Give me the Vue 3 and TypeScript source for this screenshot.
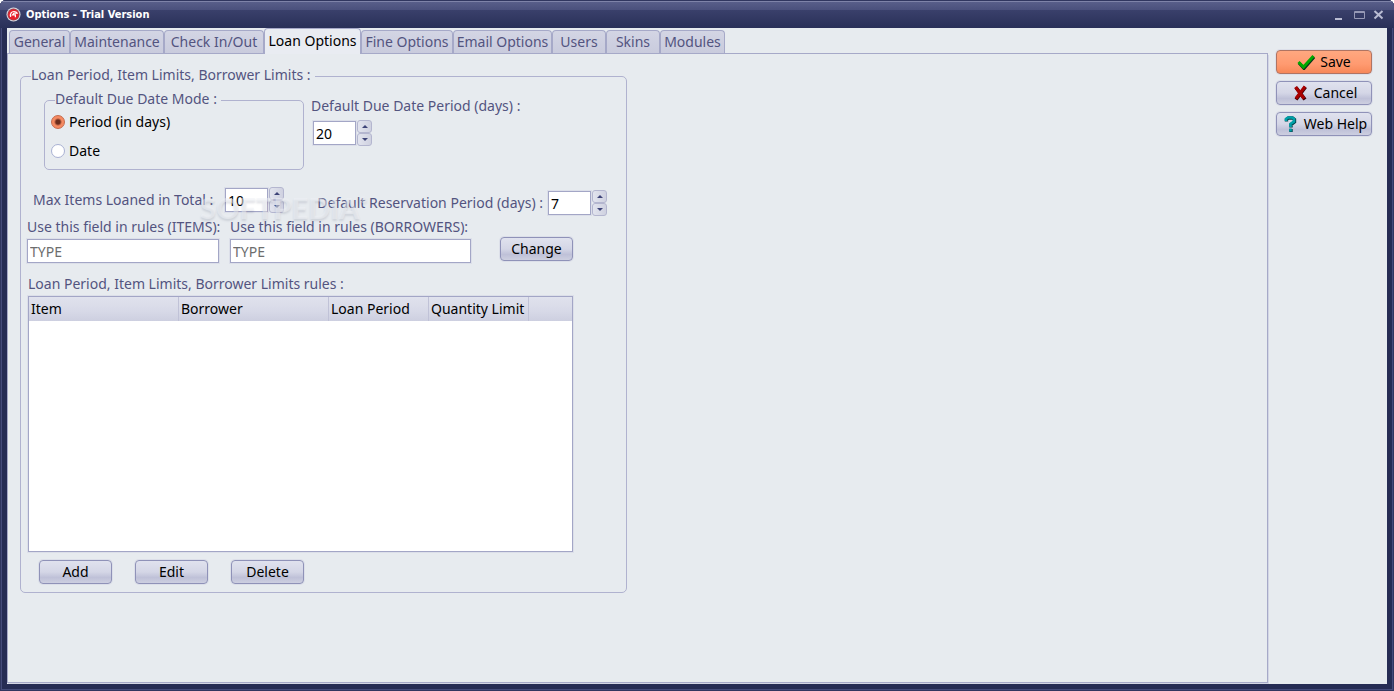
<script setup lang="ts">
import { ref } from 'vue'

const tabs = ['General', 'Maintenance', 'Check In/Out', 'Loan Options', 'Fine Options', 'Email Options', 'Users', 'Skins', 'Modules']
const activeTab = ref('Loan Options')
const dueMode = ref('period')
const duePeriod = ref(20)
const maxItems = ref(10)
const reservation = ref(7)
const columns = ['Item', 'Borrower', 'Loan Period', 'Quantity Limit']
</script>

<template>
  <div class="window">
    <header class="titlebar">
      <svg class="app-icon" viewBox="0 0 16 16" aria-hidden="true">
        <circle cx="8" cy="8" r="7.5" fill="#d9dbe2" />
        <circle cx="8" cy="8" r="6.4" fill="#9a4a55" />
        <circle cx="8" cy="8" r="5.6" fill="#e8202c" />
        <path d="M5 10.500C4 7 6 4.800 8.500 4.800c1.500 0 2.800.7 3.300 1.700H8.500L7 8.500h3V11" fill="none" stroke="#fff" stroke-width="1.300" />
      </svg>
      <h1>Options - Trial Version</h1>
      <div class="win-buttons">
        <button type="button" aria-label="Minimize"><svg viewBox="0 0 12 12"><path d="M2 10h7" stroke="#b9bcd2" stroke-width="2" /></svg></button>
        <button type="button" aria-label="Maximize"><svg viewBox="0 0 12 12"><path d="M1.500 2.500h10v7h-10zM1.500 3.500h10" fill="none" stroke="#9699b5" /></svg></button>
        <button type="button" aria-label="Close"><svg viewBox="0 0 12 12"><path d="M1.500 2l8 7.500M9.500 2l-8 7.500" stroke="#b9bcd2" stroke-width="2" /></svg></button>
      </div>
    </header>

    <div class="client">
      <main class="pane">
        <div class="tabs" role="tablist">
          <button v-for="t in tabs" :key="t" type="button" role="tab" class="tab" :class="{ active: t === activeTab }" :aria-selected="t === activeTab" @click="activeTab = t">{{ t }}</button>
        </div>
        <div class="page" role="tabpanel">
          <fieldset class="group">
            <legend>Loan Period, Item Limits, Borrower Limits :</legend>
            <div class="due-row">
              <fieldset class="mode">
                <legend>Default Due Date Mode :</legend>
                <label class="radio"><input v-model="dueMode" type="radio" name="mode" value="period" />Period (in days)</label>
                <label class="radio"><input v-model="dueMode" type="radio" name="mode" value="date" />Date</label>
              </fieldset>
              <div class="due">
                <label for="due">Default Due Date Period (days) :</label>
                <div class="spin">
                  <input id="due" v-model="duePeriod" type="text" />
                  <span class="updown">
                    <button type="button" aria-label="Increase" @click="duePeriod++"><i class="up"></i></button>
                    <button type="button" aria-label="Decrease" @click="duePeriod--"><i class="down"></i></button>
                  </span>
                </div>
              </div>
            </div>

            <div class="limit-row">
              <div class="limit total">
                <label for="max">Max Items Loaned in Total :</label>
                <div class="spin">
                  <input id="max" v-model="maxItems" type="text" />
                  <span class="updown">
                    <button type="button" aria-label="Increase" @click="maxItems++"><i class="up"></i></button>
                    <button type="button" aria-label="Decrease" @click="maxItems--"><i class="down"></i></button>
                  </span>
                </div>
              </div>
              <div class="limit reserve">
                <label for="res">Default Reservation Period (days) :</label>
                <div class="spin">
                  <input id="res" v-model="reservation" type="text" />
                  <span class="updown">
                    <button type="button" aria-label="Increase" @click="reservation++"><i class="up"></i></button>
                    <button type="button" aria-label="Decrease" @click="reservation--"><i class="down"></i></button>
                  </span>
                </div>
              </div>
              <span class="watermark" aria-hidden="true">SOFTPEDIA<sup>®</sup></span>
            </div>

            <div class="rule-fields">
              <div class="field">
                <label for="items">Use this field in rules (ITEMS):</label>
                <input id="items" type="text" value="TYPE" readonly />
              </div>
              <div class="field">
                <label for="borrowers">Use this field in rules (BORROWERS):</label>
                <input id="borrowers" type="text" value="TYPE" readonly />
              </div>
              <button type="button" class="btn change">Change</button>
            </div>

            <div class="rules-label" id="rules">Loan Period, Item Limits, Borrower Limits rules :</div>
            <div class="grid">
              <table aria-labelledby="rules">
                <thead>
                  <tr>
                    <th v-for="c in columns" :key="c" scope="col">{{ c }}</th>
                    <td></td>
                  </tr>
                </thead>
              </table>
            </div>
            <div class="actions">
              <button type="button" class="btn">Add</button>
              <button type="button" class="btn">Edit</button>
              <button type="button" class="btn">Delete</button>
            </div>
          </fieldset>
        </div>
      </main>

      <aside class="side">
        <button type="button" class="btn save">
          <svg viewBox="0 0 18 16" aria-hidden="true"><path d="M2 9l5 5.500L17 3" fill="none" stroke="#06321a" stroke-width="3" /><path d="M1.500 8l5 5L16.500 2" fill="none" stroke="#00a800" stroke-width="3" /></svg>
          Save
        </button>
        <button type="button" class="btn">
          <svg viewBox="0 0 18 16" aria-hidden="true"><path d="M5 2.500l9 12M14.500 2L5 14.500" fill="none" stroke="#3a0008" stroke-width="3.600" /><path d="M4.500 2l8.500 11.500M14 1.500L5 13.500" fill="none" stroke="#a80000" stroke-width="3.200" /></svg>
          Cancel
        </button>
        <button type="button" class="btn">
          <svg viewBox="0 0 18 16" aria-hidden="true"><path d="M5.500 5.500V3.500L7.500 2h4l2 1.500v2.500L10 8.500V11.500M10 13v3" fill="none" stroke="#004048" stroke-width="3.400" /><path d="M5 5V3L7 1.500h4L13 3v2.500L9.500 8v3M9.500 12.500v3" fill="none" stroke="#00a0a8" stroke-width="2.600" /></svg>
          Web Help
        </button>
      </aside>
    </div>
  </div>
</template>

<style>
body {
  margin: 0;
  background: #fff;
}
</style>

<style scoped>
* {
  box-sizing: border-box;
}
.window {
  min-height: 100vh;
  display: flex;
  flex-direction: column;
  padding: 0 7px 7px;
  background: #262c54;
  border-radius: 6px 6px 0 0;
  box-shadow: inset 0 0 0 1px #30365f, inset 0 0 0 2px #454b7a;
  font: 14px/18px "Noto Sans", "DejaVu Sans Condensed", sans-serif;
  color: #53547f;
}
.titlebar {
  height: 28px;
  display: flex;
  align-items: center;
  gap: 5px;
  margin: 0 -7px;
  padding: 1px 9px 0 6px;
  border-radius: 6px 6px 0 0;
  background: linear-gradient(#30365f 0 1px, #7e83a8 1px 2px, #585e89 2px, #4a507c 10px, #3a406b 10px, #293058 28px);
}
.app-icon {
  width: 15px;
  height: 15px;
}
h1 {
  flex: 1;
  margin: 0;
  font: bold 11px/16px "DejaVu Sans Condensed", "Noto Sans", sans-serif;
  color: #fff;
}
.win-buttons {
  display: flex;
  gap: 8px;
}
.win-buttons button {
  width: 12px;
  height: 12px;
  padding: 0;
  border: 0;
  background: none;
}
.win-buttons svg {
  display: block;
  width: 12px;
  height: 12px;
}
.client {
  flex: 1;
  display: flex;
  background: #e7ebef;
}
.pane {
  flex: 1;
  min-width: 0;
  display: flex;
  flex-direction: column;
  padding-bottom: 1px;
}
.tabs {
  height: 26px;
  display: grid;
  grid-template-columns: 61px 94px 100px 97px 92px 99px 54px 54px 65px;
  align-items: end;
  padding-left: 2px;
  border-bottom: 1px solid #a6a9c8;
}
.tab {
  height: 23px;
  padding: 0 0 1px;
  border: 1px solid #a6a9c8;
  border-bottom: 0;
  border-radius: 4px 4px 0 0;
  background: linear-gradient(#d3d5e4, #c9cbdd);
  font: inherit;
  color: #53547f;
  white-space: nowrap;
}
.tab.active {
  height: 26px;
  margin-bottom: -1px;
  padding-bottom: 2px;
  background: #e9ecf2;
  color: #000;
}
.page {
  flex: 1;
  padding: 12px;
  border: solid #a6a9c8;
  border-width: 0 1px 1px;
  box-shadow: 1px 1px #d3d6e5;
}
fieldset {
  min-width: 0;
  margin: 0;
  border: 1px solid #b0b2cf;
  border-radius: 5px;
}
legend {
  margin-left: 4px;
  padding: 0 4px 2px 0;
}
.group {
  width: 607px;
  padding: 4px 7px 8px 6px;
}
.due-row {
  display: flex;
  gap: 7px;
  padding-left: 17px;
}
.mode {
  width: 260px;
  height: 80px;
  padding: 3px 6px 0;
}
.radio {
  display: flex;
  align-items: center;
  gap: 4px;
  margin-bottom: 11px;
  color: #000;
}
.radio input {
  appearance: none;
  width: 14px;
  height: 14px;
  margin: 0;
  border: 1px solid #a9b1d3;
  border-radius: 50%;
  background: #fff;
}
.radio input:checked {
  border-color: #c56a4c;
  background: radial-gradient(circle, #6b2c1c 0 2px, #f58a62 4px);
}
.due {
  padding-top: 7px;
}
.spin {
  display: flex;
  align-items: center;
  gap: 1px;
}
.due .spin {
  margin: 5px 0 0 2px;
}
.spin input {
  width: 43px;
  height: 24px;
}
input[type="text"] {
  padding: 0 2px;
  border: 1px solid #a3a6c6;
  border-radius: 0;
  outline: 1px solid #dcdfe9;
  background: #fff;
  font: inherit;
  color: #000;
}
.updown {
  display: flex;
  flex-direction: column;
}
.updown button {
  width: 15px;
  height: 13px;
  display: grid;
  place-items: center;
  padding: 0;
  border: 1px solid #b4b6cf;
  border-radius: 3px;
  background: linear-gradient(90deg, #e2e4ee, #cfd1e0);
}
.updown i {
  border: 3px solid transparent;
}
.updown .up {
  border-top-width: 0;
  border-bottom-color: #3e4478;
}
.updown .down {
  border-bottom-width: 0;
  border-top-color: #3e4478;
}
.limit-row {
  position: relative;
  display: flex;
  justify-content: space-between;
  margin-top: 17px;
  padding: 0 12px 0 6px;
}
.limit {
  display: flex;
  align-items: center;
  gap: 5px;
  white-space: nowrap;
}
.total {
  width: 251px;
  justify-content: space-between;
  margin-bottom: 3px;
}
.reserve {
  margin-top: 3px;
}
.watermark {
  position: absolute;
  left: 173px;
  top: 4px;
  font: 900 29px/34px Lato, sans-serif;
  color: rgba(240, 242, 246, 0.5);
  text-shadow: 0 2px 2px rgba(90, 95, 120, 0.16);
  pointer-events: none;
}
.watermark sup {
  font-size: 9px;
  line-height: 9px;
  vertical-align: 16px;
}
.rule-fields {
  display: flex;
  align-items: flex-end;
  gap: 11px;
  margin-top: 2px;
}
.field {
  display: flex;
  flex-direction: column;
  gap: 3px;
  width: 241px;
  white-space: nowrap;
}
.field:first-child {
  width: 192px;
}
.field input {
  width: 100%;
  height: 24px;
}
.field input[type="text"] {
  color: #6d6d6d;
}
.btn {
  width: 73px;
  height: 24px;
  display: flex;
  align-items: center;
  justify-content: center;
  gap: 5px;
  padding: 0;
  border: 1px solid #8f92b8;
  border-radius: 4px;
  background: linear-gradient(#e0e2ee, #d4d6e6 50%, #bfc1d8 75%, #cdcfe0);
  box-shadow: 0 0 0 1px #dcdfe9;
  font: inherit;
  color: #000;
  white-space: nowrap;
}
.change {
  margin: 0 0 2px 18px;
}
.rules-label {
  margin: 12px 0 3px 1px;
}
.grid {
  width: 545px;
  height: 256px;
  margin-left: 1px;
  border: 1px solid #a3a6c6;
  background: #fff;
  outline: 1px solid #dcdfe9;
}
table {
  width: 100%;
  table-layout: fixed;
  border-spacing: 0;
}
thead tr {
  height: 24px;
  background: linear-gradient(#e0e2ed, #d7d9e7 60%, #cdcfe0);
}
th {
  width: 100px;
  padding: 0 2px;
  border-right: 1px solid #c0c2d7;
  font-weight: normal;
  text-align: left;
  color: #000;
  white-space: nowrap;
}
th:nth-child(-n + 2) {
  width: 150px;
}
.actions {
  display: flex;
  gap: 23px;
  padding: 8px 12px 0;
}
.side {
  width: 119px;
  display: flex;
  flex-direction: column;
  gap: 7px;
  padding: 22px 15px 0 8px;
}
.side .btn {
  width: 96px;
}
.side svg {
  width: 18px;
  height: 16px;
}
.btn.save {
  border-color: #b07462;
  background: linear-gradient(#ffa880, #ff9a70 60%, #f78858);
}
</style>
